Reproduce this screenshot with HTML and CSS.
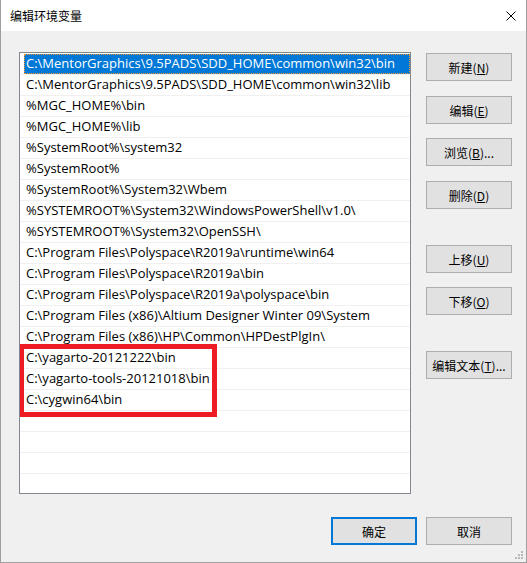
FILE: index.html
```html
<!DOCTYPE html>
<html lang="zh-CN">
<head>
    <meta charset="UTF-8">
    <title>编辑环境变量</title>
    <link rel="stylesheet" href="styles.css">
</head>
<body>
    <div class="window">
        <div class="titlebar">
            <span class="title">编辑环境变量</span>
            <svg class="close" width="10" height="10" viewBox="0 0 10 10">
                <path d="M0.5 0.5 L9.5 9.5 M9.5 0.5 L0.5 9.5" stroke="#000" stroke-width="1" fill="none"/>
            </svg>
        </div>
        <div class="content">
            <div class="list">
                <div class="row selected"><span class="cell">C:\MentorGraphics\9.5PADS\SDD_HOME\common\win32\bin</span></div>
                <div class="row"><span class="cell">C:\MentorGraphics\9.5PADS\SDD_HOME\common\win32\lib</span></div>
                <div class="row"><span class="cell">%MGC_HOME%\bin</span></div>
                <div class="row"><span class="cell">%MGC_HOME%\lib</span></div>
                <div class="row"><span class="cell">%SystemRoot%\system32</span></div>
                <div class="row"><span class="cell">%SystemRoot%</span></div>
                <div class="row"><span class="cell">%SystemRoot%\System32\Wbem</span></div>
                <div class="row"><span class="cell">%SYSTEMROOT%\System32\WindowsPowerShell\v1.0\</span></div>
                <div class="row"><span class="cell">%SYSTEMROOT%\System32\OpenSSH\</span></div>
                <div class="row"><span class="cell">C:\Program Files\Polyspace\R2019a\runtime\win64</span></div>
                <div class="row"><span class="cell">C:\Program Files\Polyspace\R2019a\bin</span></div>
                <div class="row"><span class="cell">C:\Program Files\Polyspace\R2019a\polyspace\bin</span></div>
                <div class="row"><span class="cell">C:\Program Files (x86)\Altium Designer Winter 09\System</span></div>
                <div class="row"><span class="cell">C:\Program Files (x86)\HP\Common\HPDestPlgIn\</span></div>
                <div class="row"><span class="cell">C:\yagarto-20121222\bin</span></div>
                <div class="row"><span class="cell">C:\yagarto-tools-20121018\bin</span></div>
                <div class="row"><span class="cell">C:\cygwin64\bin</span></div>
                <div class="row"><span class="cell"></span></div>
                <div class="row"><span class="cell"></span></div>
                <div class="row"><span class="cell"></span></div>
                <div class="row"><span class="cell"></span></div>
                <div class="row"><span class="cell"></span></div>
                <div class="highlight"></div>
            </div>
            <div class="buttons">
                <button class="btn">新建(<u>N</u>)</button>
                <button class="btn near">编辑(<u>E</u>)</button>
                <button class="btn close-gap">浏览(<u>B</u>)...</button>
                <button class="btn near">删除(<u>D</u>)</button>
                <button class="btn far">上移(<u>U</u>)</button>
                <button class="btn close-gap">下移(<u>O</u>)</button>
                <button class="btn far">编辑文本(<u>T</u>)...</button>
            </div>
        </div>
        <div class="footer">
            <button class="btn default">确定</button>
            <button class="btn">取消</button>
        </div>
        <svg class="grip" width="8" height="8" viewBox="0 0 8 8">
            <rect x="6" y="0" width="2" height="2" fill="#b8b8b8"/>
            <rect x="3" y="3" width="2" height="2" fill="#b8b8b8"/>
            <rect x="6" y="3" width="2" height="2" fill="#b8b8b8"/>
            <rect x="0" y="6" width="2" height="2" fill="#b8b8b8"/>
            <rect x="3" y="6" width="2" height="2" fill="#b8b8b8"/>
            <rect x="6" y="6" width="2" height="2" fill="#b8b8b8"/>
        </svg>
    </div>
</body>
</html>
```

FILE: styles.css
```css
body {
    margin: 0;
    font-family: "Open Sans", "Noto Sans CJK SC", sans-serif;
    background: #fff;
}

.window {
    position: relative;
    width: 527px;
    height: 563px;
    box-sizing: border-box;
    border: 1px solid #a0a0a0;
    border-top: none;
    background: #f0f0f0;
}

.titlebar {
    height: 31px;
    background: #fff;
    display: flex;
    align-items: center;
    justify-content: space-between;
    padding: 0 10px 0 9px;
    box-sizing: border-box;
}

.title {
    font-family: "Noto Sans CJK SC", sans-serif;
    font-size: 12px;
    color: #000;
}

.close {
    display: block;
}

.content {
    display: flex;
    padding: 21px 0 0 18px;
}

.list {
    position: relative;
    width: 392px;
    height: 442px;
    box-sizing: border-box;
    border: 1px solid #828790;
    background: #fff;
    overflow: hidden;
    padding-top: 1px;
}

.row {
    display: flex;
    height: 20px;
    border-bottom: 1px solid #f0f0f0;
    padding-left: 4px;
}

.cell {
    flex: 1;
    padding-left: 2px;
    font-size: 13px;
    line-height: 19px;
    color: #000;
    white-space: nowrap;
    box-sizing: border-box;
}

.selected .cell {
    background: #0078d7;
    color: #fff;
    outline: 1px dotted #f39a2b;
    outline-offset: -1px;
}

/* red annotation drawn over the last three entries */
.highlight {
    position: absolute;
    left: -1px;
    top: 291px;
    width: 198px;
    height: 73px;
    box-sizing: border-box;
    border: 5px solid #ed1c24;
}

.buttons {
    display: flex;
    flex-direction: column;
    margin-left: 15px;
    padding-top: 1px;
}

.btn {
    width: 86px;
    height: 28px;
    box-sizing: border-box;
    border: 1px solid #adadad;
    background: #e1e1e1;
    font-family: "Noto Sans CJK SC", sans-serif;
    font-size: 12px;
    color: #000;
    padding: 0;
}

.btn.near {
    margin-top: 15px;
}

.btn.close-gap {
    margin-top: 14px;
}

.btn.far {
    margin-top: 36px;
}

.footer {
    display: flex;
    justify-content: flex-end;
    gap: 9px;
    padding: 23px 14px 0 0;
}

.btn.default {
    border: 2px solid #0078d7;
}

.grip {
    position: absolute;
    right: 3px;
    bottom: 3px;
}
```
